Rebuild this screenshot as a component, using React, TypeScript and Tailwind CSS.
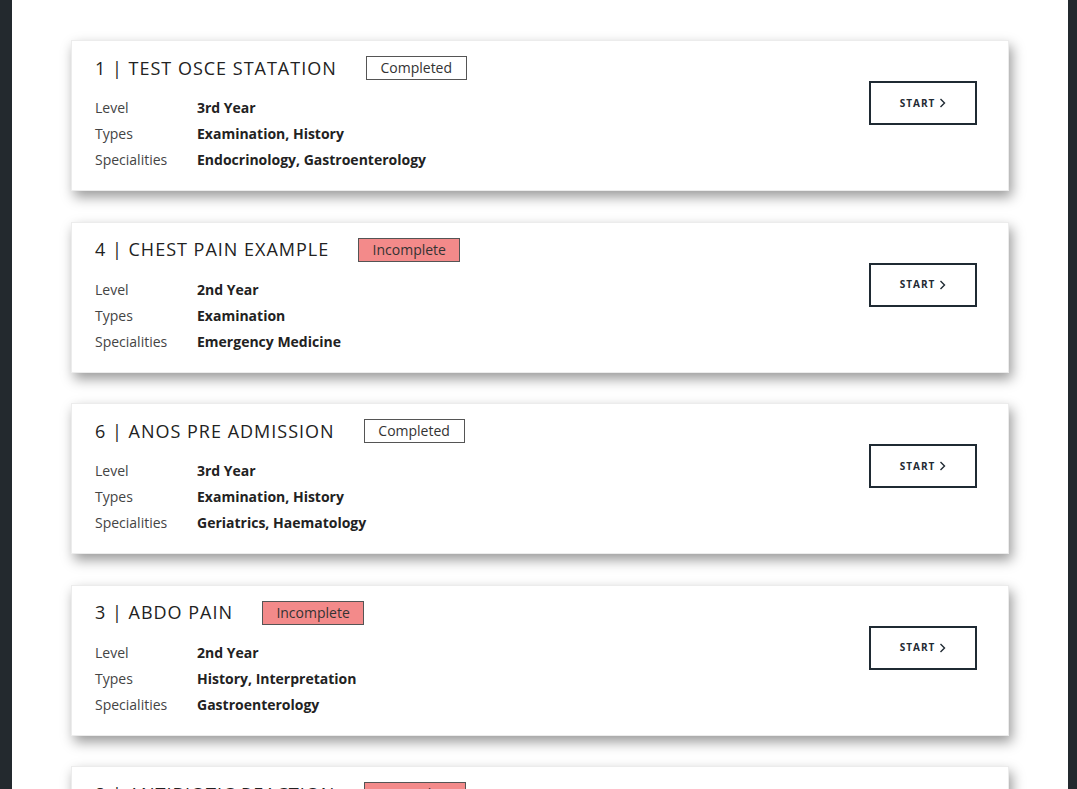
import React from "react";

type Station = {
  title: string;
  status: "Completed" | "Incomplete";
  level: string;
  types: string;
  specialities: string;
};

const stations: Station[] = [
  { title: "1 | TEST OSCE STATATION", status: "Completed", level: "3rd Year", types: "Examination, History", specialities: "Endocrinology, Gastroenterology" },
  { title: "4 | CHEST PAIN EXAMPLE", status: "Incomplete", level: "2nd Year", types: "Examination", specialities: "Emergency Medicine" },
  { title: "6 | ANOS PRE ADMISSION", status: "Completed", level: "3rd Year", types: "Examination, History", specialities: "Geriatrics, Haematology" },
  { title: "3 | ABDO PAIN", status: "Incomplete", level: "2nd Year", types: "History, Interpretation", specialities: "Gastroenterology" },
  { title: "8 | ANTIBIOTIC REACTION", status: "Incomplete", level: "2nd Year", types: "Examination", specialities: "Emergency Medicine" },
];

function Card({ s }: { s: Station }) {
  return (
    <div className="flex items-start justify-between bg-white border border-[#ececec] shadow-[3px_6px_12px_rgba(0,0,0,0.4)] pl-[23px] pr-[31px] pt-[13px] pb-[19px] h-[151px] shrink-0">
      <div className="flex flex-col">
        <div className="flex items-center h-[28px]">
          <span className="text-[18px] tracking-[1px] text-[#222]">{s.title}</span>
          <span
            className={
              s.status === "Completed"
                ? "ml-[29px] border border-[#555] bg-white text-[#333] text-[14px] leading-[22px] w-[101px] text-center"
                : "ml-[29px] border border-[#555] bg-[#f38a8a] text-[#333] text-[14px] leading-[22px] w-[102px] text-center"
            }
          >
            {s.status}
          </span>
        </div>
        <div className="mt-[13px] grid grid-cols-[102px_auto] text-[14px] leading-[26px] text-[#333]">
          <span className="text-[#444]">Level</span>
          <span className="font-bold text-[#222]">{s.level}</span>
          <span className="text-[#444]">Types</span>
          <span className="font-bold text-[#222]">{s.types}</span>
          <span className="text-[#444]">Specialities</span>
          <span className="font-bold text-[#222]">{s.specialities}</span>
        </div>
      </div>
      <button className="mt-[27px] w-[108px] h-[44px] border-2 border-[#1f2a33] flex items-center justify-center gap-[4px] text-[10px] font-bold tracking-[1px] text-[#1f2a33]">
        START
        <svg width="7" height="10" viewBox="0 0 7 10" fill="none">
          <path d="M1.5 1 L5.5 5 L1.5 9" stroke="#1f2a33" strokeWidth="1.4" />
        </svg>
      </button>
    </div>
  );
}

export default function App() {
  return (
    <div
      className="h-[789px] overflow-hidden bg-[#23292e] flex justify-start"
      style={{ fontFamily: "'Open Sans', 'Noto Sans', sans-serif" }}
    >
      <div className="ml-[12px] w-[1056px] h-full bg-white pt-[40px] pl-[59px] pr-[59px] flex flex-col gap-[30.5px]">
        {stations.map((s, i) => (
          <Card key={i} s={s} />
        ))}
      </div>
    </div>
  );
}
